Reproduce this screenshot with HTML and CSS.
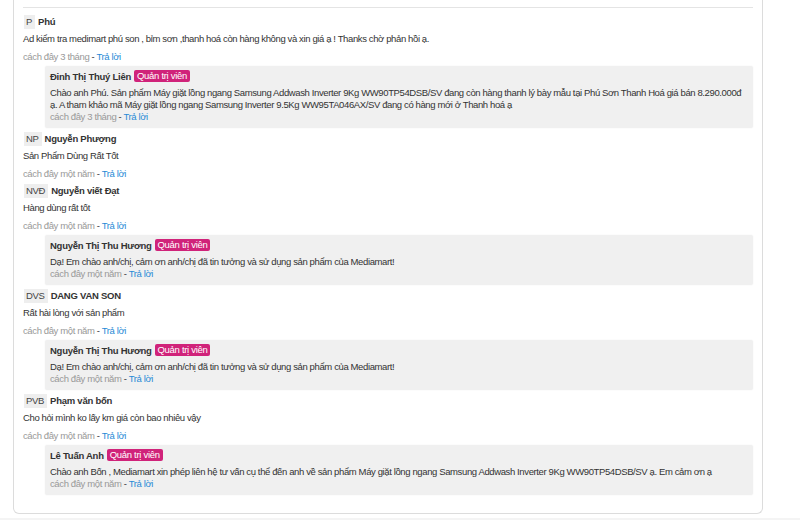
FILE: index.html
```html
<!DOCTYPE html>
<html lang="vi">
<head>
<meta charset="utf-8">
<title>Bình luận</title>
<link rel="stylesheet" href="styles.css">
</head>
<body>
<div class="card">
  <div class="divider"></div>
  <div class="list">
    <div class="comment">
      <div class="head"><span class="avatar">P</span><span class="name">Phú</span></div>
      <div class="text">Ad kiểm tra medimart phú son , bỉm sơn ,thanh hoá còn hàng không và xin giá ạ ! Thanks chờ phản hồi ạ.</div>
      <div class="meta">cách đây 3 tháng <span class="dash">-</span> <a class="reply-link">Trả lời</a></div>
      <div class="reply">
        <div class="rhead"><span class="name">Đinh Thị Thuý Liên</span><span class="badge">Quản trị viên</span></div>
        <div class="rtext">Chào anh Phú. Sản phẩm Máy giặt lồng ngang Samsung Addwash Inverter 9Kg WW90TP54DSB/SV đang còn hàng thanh lý bày mẫu tại Phú Sơn Thanh Hoá giá bán 8.290.000đ ạ. A tham khảo mã Máy giặt lồng ngang Samsung Inverter 9.5Kg WW95TA046AX/SV đang có hàng mới ở Thanh hoá ạ</div>
        <div class="rmeta">cách đây 3 tháng <span class="dash">-</span> <a class="reply-link">Trả lời</a></div>
      </div>
    </div>

    <div class="comment">
      <div class="head"><span class="avatar">NP</span><span class="name">Nguyễn Phượng</span></div>
      <div class="text">Sản Phẩm Dùng Rất Tốt</div>
      <div class="meta">cách đây một năm <span class="dash">-</span> <a class="reply-link">Trả lời</a></div>
    </div>

    <div class="comment">
      <div class="head"><span class="avatar">NVĐ</span><span class="name">Nguyễn viết Đạt</span></div>
      <div class="text">Hàng dùng rất tốt</div>
      <div class="meta">cách đây một năm <span class="dash">-</span> <a class="reply-link">Trả lời</a></div>
      <div class="reply">
        <div class="rhead"><span class="name">Nguyễn Thị Thu Hương</span><span class="badge">Quản trị viên</span></div>
        <div class="rtext">Dạ! Em chào anh/chị, cảm ơn anh/chị đã tin tưởng và sử dụng sản phẩm của Mediamart!</div>
        <div class="rmeta">cách đây một năm <span class="dash">-</span> <a class="reply-link">Trả lời</a></div>
      </div>
    </div>

    <div class="comment">
      <div class="head"><span class="avatar">DVS</span><span class="name">DANG VAN SON</span></div>
      <div class="text">Rất hài lòng với sản phẩm</div>
      <div class="meta">cách đây một năm <span class="dash">-</span> <a class="reply-link">Trả lời</a></div>
      <div class="reply">
        <div class="rhead"><span class="name">Nguyễn Thị Thu Hương</span><span class="badge">Quản trị viên</span></div>
        <div class="rtext">Dạ! Em chào anh/chị, cảm ơn anh/chị đã tin tưởng và sử dụng sản phẩm của Mediamart!</div>
        <div class="rmeta">cách đây một năm <span class="dash">-</span> <a class="reply-link">Trả lời</a></div>
      </div>
    </div>

    <div class="comment">
      <div class="head"><span class="avatar">PVB</span><span class="name">Phạm văn bốn</span></div>
      <div class="text">Cho hỏi mình ko lấy km giá còn bao nhiêu vậy</div>
      <div class="meta">cách đây một năm <span class="dash">-</span> <a class="reply-link">Trả lời</a></div>
      <div class="reply">
        <div class="rhead"><span class="name">Lê Tuấn Anh</span><span class="badge">Quản trị viên</span></div>
        <div class="rtext">Chào anh Bốn , Mediamart xin phép liên hệ tư vấn cụ thể đến anh về sản phẩm Máy giặt lồng ngang Samsung Addwash Inverter 9Kg WW90TP54DSB/SV ạ. Em cảm ơn ạ</div>
        <div class="rmeta">cách đây một năm <span class="dash">-</span> <a class="reply-link">Trả lời</a></div>
      </div>
    </div>
  </div>
</div>
<div class="below"></div>
</body>
</html>
```

FILE: styles.css
```css
html, body {
  margin: 0;
  padding: 0;
  background: #fff;
}

body {
  font-family: "Liberation Sans", Arial, sans-serif;
  font-size: 9.5px;
  letter-spacing: -0.38px;
  color: #333;
  padding: 0 37px 0 13px;
}

.card {
  border: 1px solid #dcdcdc;
  border-top: 0;
  border-radius: 0 0 6px 6px;
  padding: 7px 9px 20px 9px;
  height: 486px;
}

.divider {
  border-top: 1px solid #e4e4e4;
  margin-bottom: 5px;
}

.list {
  display: flex;
  flex-direction: column;
}

.comment {
  display: flex;
  flex-direction: column;
}

.head {
  display: flex;
  align-items: center;
  height: 17px;
}

.avatar {
  background: #eee;
  color: #444;
  font-size: 9.5px;
  letter-spacing: -0.3px;
  line-height: 14px;
  padding: 0 3px 0 2px;
  margin-left: 1px;
  margin-right: 3px;
}

.name {
  font-weight: bold;
  font-size: 9.5px;
  letter-spacing: -0.25px;
  color: #333;
}

.text {
  line-height: 17px;
  margin-bottom: 1px;
}

.meta {
  line-height: 17px;
  color: #999;
}

.dash {
  color: #333;
}

.reply-link {
  color: #288ad6;
  text-decoration: none;
}

.reply {
  margin: 1px 0 2px 22px;
  background: #f0f0f0;
  box-shadow: 0 0 2px rgba(0, 0, 0, 0.06);
  border-radius: 2px;
  padding: 3px 5px 5px 5px;
}

.rhead {
  display: flex;
  align-items: center;
  height: 14px;
  margin-bottom: 4px;
}

.badge {
  background: #d0237a;
  color: #fff;
  font-size: 9.5px;
  letter-spacing: -0.3px;
  line-height: 12px;
  padding: 0 3px;
  border-radius: 2px;
  margin-left: 3px;
}

.rtext {
  line-height: 12px;
}

.rmeta {
  line-height: 12px;
  color: #999;
}

.below {
  margin-top: 4px;
  height: 10px;
  background: #f4f4f4;
  margin-left: -13px;
  margin-right: -37px;
}
```
